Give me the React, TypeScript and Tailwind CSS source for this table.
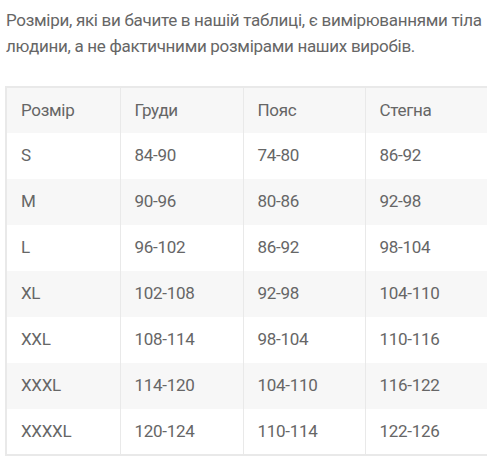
const rows = [
  ["S", "84-90", "74-80", "86-92"],
  ["M", "90-96", "80-86", "92-98"],
  ["L", "96-102", "86-92", "98-104"],
  ["XL", "102-108", "92-98", "104-110"],
  ["XXL", "108-114", "98-104", "110-116"],
  ["XXXL", "114-120", "104-110", "116-122"],
  ["XXXXL", "120-124", "110-114", "122-126"],
];

export default function App() {
  return (
    <div className="w-[487px] h-[459px] bg-white text-[#666666] font-['Roboto',sans-serif] overflow-hidden tracking-[-0.3px]">
      <p className="pl-[6px] pt-[7px] text-[17px] leading-[26px]">
        Розміри, які ви бачите в нашій таблиці, є вимірюваннями тіла людини, а не фактичними розмірами наших виробів.
      </p>
      <table className="ml-[5px] mt-[27px] w-[482px] border-collapse border-2 border-[#e9e9e9] text-[17px] table-fixed">
        <colgroup>
          <col className="w-[114px]" />
          <col className="w-[123px]" />
          <col className="w-[122px]" />
          <col className="w-[123px]" />
        </colgroup>
        <thead>
          <tr className="h-[46px] bg-[#f7f7f7]">
            {["Розмір", "Груди", "Пояс", "Стегна"].map((h) => (
              <th key={h} className="border-x border-[#e9e9e9] px-[14px] text-left font-normal">
                {h}
              </th>
            ))}
          </tr>
        </thead>
        <tbody>
          {rows.map((r, i) => (
            <tr key={r[0]} className={i % 2 === 1 ? "h-[46px] bg-[#f7f7f7]" : "h-[46px] bg-white"}>
              {r.map((c, j) => (
                <td key={j} className="border-x border-[#e9e9e9] px-[14px]">
                  {c}
                </td>
              ))}
            </tr>
          ))}
        </tbody>
      </table>
    </div>
  );
}
